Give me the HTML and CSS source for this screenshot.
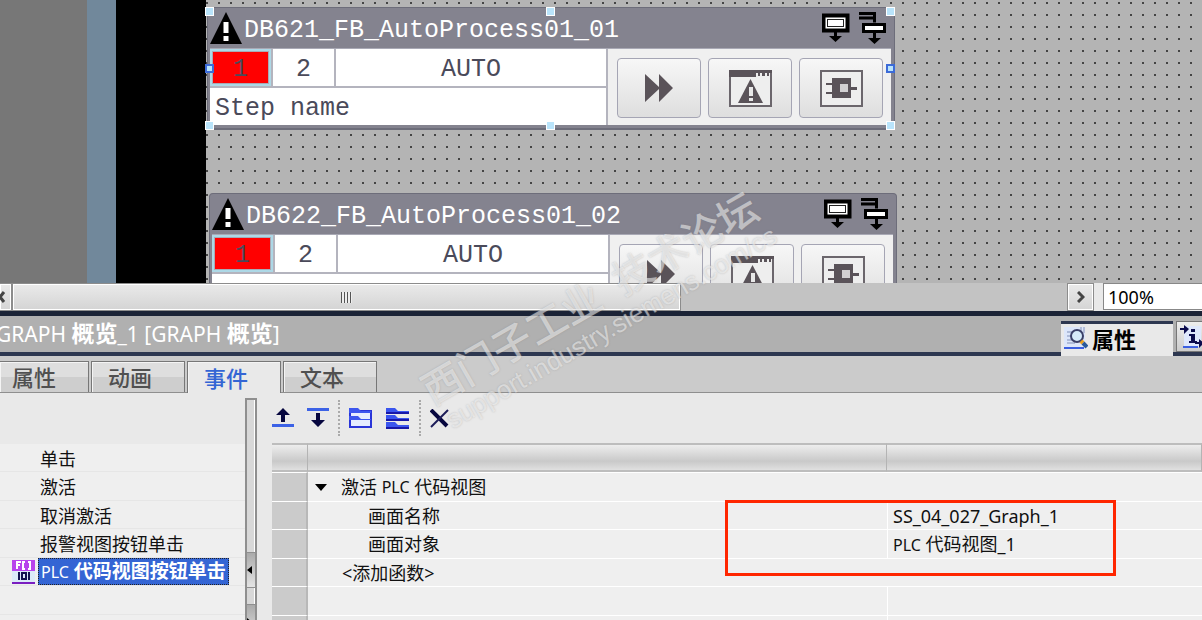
FILE: index.html
```
<!DOCTYPE html>
<html lang="zh-CN">
<head>
  <meta charset="UTF-8" />
  <title>GRAPH 概览_1</title>
  <link rel="stylesheet" href="styles.css">
</head>
<body>

  <!-- shared symbols -->
  <svg class="defs" width="0" height="0" aria-hidden="true">
    <symbol id="warn" viewBox="0 0 32 32">
      <path d="M16 0 L32 32 H0 Z" fill="#000"/>
      <path d="M13.500 10 h5 v11 h-5z M13.500 24 h5 v5 h-5z" fill="#fff"/>
    </symbol>
    <symbol id="step-out" viewBox="0 0 28 30">
      <rect x="1.500" y="2.500" width="24" height="15" fill="#fff" stroke="#000" stroke-width="4"/>
      <rect x="5.500" y="6.500" width="16" height="7" fill="#fff" stroke="#222"/>
      <path d="M12 18h3v5h5l-6.500 6l-6.500-6h5z" fill="#000"/>
    </symbol>
    <symbol id="step-branch" viewBox="0 0 28 32">
      <path d="M0 1.500h15.500v9M0 6h15.500" fill="none" stroke="#000" stroke-width="3"/>
      <rect x="4.500" y="12.500" width="21" height="7" fill="#fff" stroke="#000" stroke-width="3"/>
      <path d="M14 21h3v5h5l-6.500 6l-6.500-6h5z" fill="#000"/>
    </symbol>
    <symbol id="forward" viewBox="0 0 28 28">
      <path d="M0 0l14 13V0l14 14l-14 14V15L0 28z" fill="#5a5359"/>
    </symbol>
    <symbol id="alarm-view" viewBox="0 0 43 37">
      <rect x="1" y="1" width="41" height="35" fill="#eee" stroke="#6b666c" stroke-width="2"/>
      <path d="M0 0h43v3H0zM0 3h27v4H0zM29 3h2v3h-2zM33 3h3v3h-3zM38 3h2v3h-2z" fill="#5a5359"/>
      <path d="M21.500 9L34 33H9z" fill="#5a5359"/>
      <path d="M20 17h4v9h-4zM20 28h4v3h-4z" fill="#e8e8e8"/>
    </symbol>
    <symbol id="code-view" viewBox="0 0 43 37">
      <rect x="1" y="1" width="41" height="35" fill="#eee" stroke="#6b666c" stroke-width="2"/>
      <path d="M12 8h19v20H12zM6 13h7v2H6zM6 22h7v2H6zM30 17h7v3h-7z" fill="#5a5359"/>
      <rect x="20" y="14" width="8" height="8" fill="#d2d0d2"/>
    </symbol>
  </svg>

  <main class="canvas">
    <div class="band-gray"></div>
    <div class="band-blue"></div>
    <div class="band-black"></div>
    <div class="grid-area">

      <section class="graph graph-1">
        <header>
          <svg class="warn"><use href="#warn"/></svg>
          <h2>DB621_FB_AutoProcess01_01</h2>
          <svg class="step-out"><use href="#step-out"/></svg>
          <svg class="step-branch"><use href="#step-branch"/></svg>
        </header>
        <div class="graph-body">
          <div class="cells">
            <div class="cell active">1</div>
            <div class="cell">2</div>
            <div class="cell">AUTO</div>
            <div class="cell step">Step name</div>
          </div>
          <div class="graph-buttons">
            <button aria-label="下一步"><svg class="forward"><use href="#forward"/></svg></button>
            <button aria-label="报警视图"><svg class="framed"><use href="#alarm-view"/></svg></button>
            <button aria-label="代码视图"><svg class="framed"><use href="#code-view"/></svg></button>
          </div>
        </div>
        <i class="handle top left"></i>
        <i class="handle top center"></i>
        <i class="handle top right"></i>
        <i class="handle middle left"></i>
        <i class="handle middle right"></i>
        <i class="handle bottom left"></i>
        <i class="handle bottom center"></i>
        <i class="handle bottom right"></i>
      </section>

      <section class="graph graph-2">
        <header>
          <svg class="warn"><use href="#warn"/></svg>
          <h2>DB622_FB_AutoProcess01_02</h2>
          <svg class="step-out"><use href="#step-out"/></svg>
          <svg class="step-branch"><use href="#step-branch"/></svg>
        </header>
        <div class="graph-body">
          <div class="cells">
            <div class="cell active">1</div>
            <div class="cell">2</div>
            <div class="cell">AUTO</div>
            <div class="cell step"></div>
          </div>
          <div class="graph-buttons">
            <button aria-label="下一步"><svg class="forward"><use href="#forward"/></svg></button>
            <button aria-label="报警视图"><svg class="framed"><use href="#alarm-view"/></svg></button>
            <button aria-label="代码视图"><svg class="framed"><use href="#code-view"/></svg></button>
          </div>
        </div>
      </section>

    </div>
  </main>

  <div class="scroll-row">
    <button class="scroll-left" aria-label="向左滚动">
      <svg width="8" height="12" viewBox="0 0 8 12"><path d="M6 1L2 6l4 5" fill="none" stroke="#444" stroke-width="3"/></svg>
    </button>
    <div class="track">
      <div class="thumb"><span class="grip"></span></div>
    </div>
    <button class="scroll-right" aria-label="向右滚动">
      <svg width="8" height="12" viewBox="0 0 8 12"><path d="M1 1l5 5l-5 5" fill="none" stroke="#444" stroke-width="3"/></svg>
    </button>
    <input class="zoom" type="text" value="100%" aria-label="缩放">
  </div>

  <div class="title-bar">
    <h1>GRAPH <b>概览</b>_1 [GRAPH <b>概览</b>]</h1>
    <button class="pane-tab current">
      <svg width="24" height="23" viewBox="0 0 24 23">
        <path d="M0 0h21v21H0z" fill="#dce6fa"/>
        <path d="M0 21h20" stroke="#3b5fe0" stroke-width="2"/>
        <path d="M17 0v6M20 0v6" stroke="#8a94b8"/>
        <path d="M3 5h5M3 9h4M3 13h5M3 16h8" stroke="#8090b8"/>
        <circle cx="13" cy="9" r="6" fill="#d5eaf9" stroke="#3a4068" stroke-width="2"/>
        <path d="M17 14l2 2" stroke="#e8a020" stroke-width="4"/>
        <path d="M19 16l4 4" stroke="#2a5a9a" stroke-width="4"/>
      </svg>
      属性
    </button>
    <button class="pane-tab" aria-label="信息">
      <svg width="24" height="24" viewBox="0 0 24 24">
        <path d="M4 1h17v21H4z" fill="#dfe8fc"/>
        <path d="M3 22h15" stroke="#3b5fe0" stroke-width="2"/>
        <path d="M0 3h4V0l5 4l-5 5V5H0zM15 17h4v-3l5 4l-5 5v-4h-4z" fill="#0b0b4c"/>
        <path d="M11 4h4v3h-4zM9 9h6v7h2v2H9v-2h2v-5H9z" fill="#0b0b4c"/>
      </svg>
    </button>
  </div>

  <nav class="tabs">
    <button>属性</button>
    <button>动画</button>
    <button class="current">事件</button>
    <button>文本</button>
  </nav>

  <div class="panel">
    <ul class="events">
      <li><span>单击</span></li>
      <li><span>激活</span></li>
      <li><span>取消激活</span></li>
      <li><span>报警视图按钮单击</span></li>
      <li class="selected">
        <svg width="23" height="24" viewBox="0 0 23 24">
          <path d="M0 0h23v11H0z" fill="#b844ec"/>
          <path d="M0 11h23v11H0z" fill="#dceaf8"/>
          <path d="M0 22h23v2H0z" fill="#7a1ec0"/>
          <path d="M5 9V2h4M5 5h3M13 2h-2v7h2M16 2h2v7h-2" fill="none" stroke="#fff" stroke-width="2"/>
          <path d="M7 12v8M17 12v8" stroke="#13134f" stroke-width="2"/>
          <rect x="10" y="13" width="4" height="6" fill="none" stroke="#13134f" stroke-width="2"/>
        </svg>
        <span><small>PLC</small> 代码视图按钮单击</span>
      </li>
      <li></li>
      <li></li>
    </ul>

    <div class="splitter">
      <button class="collapse" aria-label="收起"><svg width="5" height="8" viewBox="0 0 5 8"><path d="M5 0v8L0 4z"/></svg></button>
      <button class="expand" aria-label="展开"><svg width="5" height="8" viewBox="0 0 5 8"><path d="M0 0v8l5-4z"/></svg></button>
    </div>

    <div class="functions">
      <div class="toolbar">
        <button aria-label="上移">
          <svg width="22" height="20" viewBox="0 0 22 20">
            <path d="M11 0l7 7h-5v7H9V7H4z" fill="#07073f"/><path d="M0 16h22v3H0z" fill="#3c62e6"/>
          </svg>
        </button>
        <button aria-label="下移">
          <svg width="22" height="20" viewBox="0 0 22 20">
            <path d="M0 0h22v3H0z" fill="#3c62e6"/><path d="M9 5h4v7h5l-7 7l-7-7h5z" fill="#07073f"/>
          </svg>
        </button>
        <i class="sep"></i>
        <button aria-label="全部展开">
          <svg width="24" height="21" viewBox="0 0 24 21">
            <path d="M1 3h21v16H1z" fill="#e6ecff" stroke="#2a35d8" stroke-width="2"/>
            <path d="M0 0h9l3 3h10v2H0zM0 8h9l3 3h10v1H0z" fill="#3c56ee"/>
          </svg>
        </button>
        <button aria-label="全部折叠">
          <svg width="24" height="21" viewBox="0 0 24 21">
            <path d="M0 0h9l3 3h11v3H0zM0 7h9l3 3h11v3H0zM0 14h9l3 3h11v4H0z" fill="#3a55ee"/>
            <path d="M0 5h23M0 12h23M0 20h23" stroke="#1717a8" stroke-width="2"/>
          </svg>
        </button>
        <i class="sep"></i>
        <button aria-label="删除">
          <svg width="20" height="19" viewBox="0 0 20 19">
            <path d="M1 1l16 16" stroke="#07073f" stroke-width="4"/><path d="M18 1L1 18" stroke="#1c1c58" stroke-width="2"/>
          </svg>
        </button>
      </div>

      <div class="table-wrap">
        <table>
          <thead>
            <tr><th class="gutter"></th><th class="name"></th><th></th></tr>
          </thead>
          <tbody>
            <tr>
              <td class="gutter"></td>
              <td colspan="2">
                <div class="root"><svg width="12" height="7" viewBox="0 0 12 7"><path d="M0 0h12L6 7z"/></svg>激活 <small>PLC</small> 代码视图</div>
              </td>
            </tr>
            <tr>
              <td class="gutter"></td><td class="child">画面名称</td><td class="value">SS_04_027_Graph_1</td>
            </tr>
            <tr>
              <td class="gutter"></td><td class="child">画面对象</td><td class="value"><small>PLC</small> 代码视图_1</td>
            </tr>
            <tr>
              <td class="gutter"></td><td class="add" colspan="2">&lt;添加函数&gt;</td>
            </tr>
            <tr><td class="gutter"></td><td></td><td class="value"></td></tr>
            <tr><td class="gutter"></td><td></td><td class="value"></td></tr>
          </tbody>
        </table>
        <div class="mark"></div>
      </div>
    </div>
  </div>

  <div class="watermark">
    <p class="cn">西门子工业&ensp;技术论坛</p>
    <p class="url">support.industry.siemens.com/cs</p>
  </div>

</body>
</html>
```
FILE: styles.css
```
* {
  box-sizing: border-box;
}
body {
  position: relative;
  display: flex;
  flex-direction: column;
  height: 100vh;
  margin: 0;
  overflow: hidden;
  font-family: "Noto Sans", "Noto Sans CJK SC", sans-serif;
  font-size: 18px;
  color: #111;
  background: #e9e9e9;
}
button {
  padding: 0;
  border: none;
  background: none;
  font-family: inherit;
  color: inherit;
}
svg {
  flex: none;
}
.defs {
  position: absolute;
}
h1, h2, p, ul {
  margin: 0;
  padding: 0;
}

/* design canvas */
.canvas {
  display: flex;
  flex: 0 0 283px;
  overflow: hidden;
}
.band-gray {
  width: 87px;
  background: #777;
}
.band-blue {
  width: 29px;
  background: #71889b;
}
.band-black {
  width: 90px;
  background: #000;
}
.grid-area {
  position: relative;
  flex: 1;
  background: #b4b4b4 conic-gradient(from 90deg at 10px 10px, #444 90deg, #b4b4b4 0) -10px -8px / 12px 12px;
}
.graph {
  position: absolute;
  width: 688px;
  padding: 0 3px 3px 2px;
  border: 1px solid #6d6d7a;
  border-bottom-width: 2px;
  border-radius: 4px;
  background: #84838f;
  font-family: "Liberation Mono", monospace;
  font-size: 25px;
  color: #4a4a5a;
}
.graph-1 {
  left: 1px;
  top: 7px;
}
.graph-2 {
  left: 3px;
  top: 193px;
}
.graph header {
  display: flex;
  align-items: center;
  height: 40px;
}
.graph h2 {
  flex: 1;
  padding: 6px 0 0 2px;
  font-size: 25px;
  font-weight: normal;
  line-height: 38px;
  color: #fff;
}
.warn {
  width: 32px;
  height: 32px;
}
.step-out {
  width: 28px;
  height: 30px;
  margin-right: 9px;
}
.step-branch {
  width: 28px;
  height: 32px;
  margin-right: 4px;
}
.graph-body {
  display: flex;
  height: 77px;
  border-top: 1px solid #a9a9b5;
}
.cells {
  display: grid;
  grid-template-columns: 61px 61px 1fr;
  grid-template-rows: 37px 37px;
  gap: 2px;
  flex: 1;
  background: #b4b4be;
}
.cell {
  background: #fff;
  text-align: center;
  line-height: 42px;
}
.cell.active {
  border: 2px solid #add8e6;
  outline: 1px solid #a9a9b5;
  outline-offset: -3px;
  background: #f00;
  line-height: 38px;
}
.cell.step {
  grid-column: 1 / 4;
  padding-left: 5px;
  text-align: left;
}
.graph-buttons {
  display: flex;
  gap: 7px;
  padding: 9px 8px 8px 9px;
  border-left: 2px solid #b4b4be;
  background: #f0f0f0;
}
.graph-buttons button {
  display: flex;
  align-items: center;
  justify-content: center;
  width: 84px;
  height: 60px;
  border: 1px solid #a5a5b4;
  border-radius: 4px;
  background: linear-gradient(#f7f7f7, #dedede);
}
.forward {
  width: 28px;
  height: 28px;
}
.framed {
  width: 43px;
  height: 37px;
}

/* selection handles */
.handle {
  position: absolute;
  width: 9px;
  height: 9px;
  border: 1px solid #fff;
  background: #b9e4fb;
}
.handle.top {
  top: -1px;
}
.handle.middle {
  top: 56px;
  border: 2px solid #3c6bd8;
}
.handle.bottom {
  bottom: -2px;
}
.handle.left {
  left: -3px;
}
.handle.center {
  left: calc(50% - 5px);
}
.handle.right {
  right: -1px;
}

/* horizontal scrollbar */
.scroll-row {
  display: flex;
  flex: 0 0 28px;
  background: #e9e9e9;
}
.scroll-left, .scroll-right, .thumb {
  display: flex;
  align-items: center;
  justify-content: center;
  border: 1px solid #8c8c8c;
  box-shadow: inset 0 0 0 1px #fff;
  background: linear-gradient(#eaeaea, #d4d4d4);
}
.scroll-left {
  width: 12px;
  padding-right: 8px;
  border-left: none;
}
.track {
  flex: 1;
  background: #c3c3c3;
}
.thumb {
  width: 669px;
  height: 28px;
}
.grip {
  width: 11px;
  height: 11px;
  background: repeating-linear-gradient(90deg, #555 0 1px, #eee 1px 3px);
}
.scroll-right {
  width: 27px;
}
.zoom {
  width: 108px;
  height: 27px;
  margin-left: 9px;
  margin-right: -9px;
  padding: 0 4px;
  border: 1px solid #888;
  background: #fff;
  font-family: inherit;
  font-size: 18px;
}

/* title of the inspector */
.title-bar {
  display: flex;
  flex: 0 0 45px;
  border-top: 5px solid #1b2336;
  border-bottom: 4px solid #2d3750;
  background: #b0b0b0;
}
.title-bar h1 {
  flex: 1;
  margin-left: -4px;
  font-size: 21px;
  font-weight: normal;
  line-height: 34px;
  color: #fff;
}
.title-bar h1 b {
  font-size: 23px;
}
.pane-tab {
  display: flex;
  align-items: center;
  gap: 4px;
  width: 26px;
  height: 31px;
  margin: 5px 0 0 3px;
  padding-left: 3px;
  border: 1px solid #777;
  border-right: none;
  background: linear-gradient(#eee, #ccc);
  font-size: 22px;
  font-weight: bold;
}
.pane-tab.current {
  width: 112px;
  height: 35px;
  margin-bottom: -4px;
  padding-bottom: 4px;
  border: none;
  border-top: 3px solid #2d3750;
  background: #e9e9e9;
  color: #000;
}

.tabs {
  display: flex;
  flex: 0 0 37px;
  gap: 2px;
  padding-top: 5px;
  border-bottom: 1px solid #8f8f8f;
  background: #cbcbcb;
}
.tabs button {
  width: 94px;
  padding-right: 16px;
  border: 1px solid #777;
  border-bottom: none;
  box-shadow: inset 1px 1px 0 #f4f4f4;
  background: linear-gradient(#dedede 50%, #cecece 50%);
  font-size: 22px;
  font-weight: 500;
  line-height: 28px;
  color: #505050;
}
.tabs button:first-child {
  width: 89px;
  padding-right: 20px;
  border-left: none;
}
.tabs button.current {
  margin-bottom: -1px;
  background: #e9e9e9;
  color: #3465d4;
}

/* event list */
.panel {
  display: flex;
  flex: 1;
  min-height: 0;
  overflow: hidden;
}
.events {
  width: 245px;
  padding-top: 51px;
  list-style: none;
}
.events li {
  display: flex;
  align-items: center;
  height: 28px;
  padding-left: 40px;
  border-bottom: 1px solid #e6e6e6;
  background: #efefef;
}
.events li:nth-child(even) {
  height: 29px;
}
.events li.selected {
  gap: 3px;
  padding-left: 12px;
}
.events .selected span {
  padding: 0 2px;
  border: 1px dotted #fff;
  outline: 1px dotted #222;
  outline-offset: -1px;
  background: #3465d4;
  color: #fff;
  font-size: 19px;
  font-weight: bold;
  line-height: 24px;
  white-space: nowrap;
}
small {
  font-size: 16px;
  font-weight: normal;
}
.splitter {
  display: flex;
  flex-direction: column;
  width: 12px;
  margin-top: 5px;
  padding-top: 152px;
  border: 2px solid #8f8f8f;
  border-bottom: none;
  box-shadow: inset -1px 0 0 #fff;
  background: #d8d8d8;
}
.splitter button {
  display: flex;
  flex: none;
  align-items: center;
  height: 36px;
  border-top: 1px solid #8f8f8f;
  border-bottom: 1px solid #8f8f8f;
  background: linear-gradient(#aaa, #e4e4e4);
}
.splitter .expand {
  margin-top: 16px;
}

/* function list */
.functions {
  flex: 1;
  padding-left: 15px;
}
.toolbar {
  display: flex;
  align-items: center;
  gap: 13px;
  height: 50px;
}
.toolbar button {
  display: flex;
}
.toolbar .sep {
  height: 36px;
  margin: 0 -4px;
  border-left: 2px dotted #aaa;
}
.table-wrap {
  position: relative;
}
table {
  width: 100%;
  table-layout: fixed;
  border-collapse: separate;
  border-spacing: 0;
}
th {
  height: 29px;
  padding: 0;
  border-top: 2px solid #bdbdbd;
  border-bottom: 2px solid #bdbdbd;
  border-right: 1px solid #b4b4b4;
  background: linear-gradient(#ededed, #c9c9c9 65%, #e0e0e0);
}
th.gutter {
  width: 36px;
}
th.name {
  width: 579px;
}
td {
  height: 28px;
  padding: 0;
  border-top: 1px solid #fff;
  background: #efefef;
  line-height: 26px;
}
tr:nth-child(odd) td {
  height: 29px;
}
td.gutter {
  border-right: 2px solid #b8b8b8;
  background: #cbcbcb;
}
td.child {
  padding-left: 60px;
}
td.add {
  padding-left: 34px;
}
td.value {
  padding-left: 5px;
  border-left: 1px solid #fff;
}
.root {
  display: flex;
  align-items: center;
  padding-left: 7px;
  white-space: pre;
}
.root svg {
  margin-right: 14px;
}
/* highlight over the value cells */
.mark {
  position: absolute;
  left: 453px;
  top: 57px;
  width: 391px;
  height: 76px;
  border: 3px solid #ff2600;
}

.watermark {
  position: absolute;
  left: 415px;
  top: 376px;
  color: rgba(255, 255, 255, 0.5);
  text-shadow: 0 0 2px rgba(120, 120, 120, 0.4);
  white-space: nowrap;
  transform: rotate(-30deg);
  transform-origin: 0 0;
  pointer-events: none;
}
.watermark .cn {
  font-size: 40px;
  font-weight: 500;
  line-height: 40px;
}
.watermark .url {
  padding-left: 6px;
  font-family: "Liberation Sans", sans-serif;
  font-size: 26px;
  line-height: 32px;
}
```
